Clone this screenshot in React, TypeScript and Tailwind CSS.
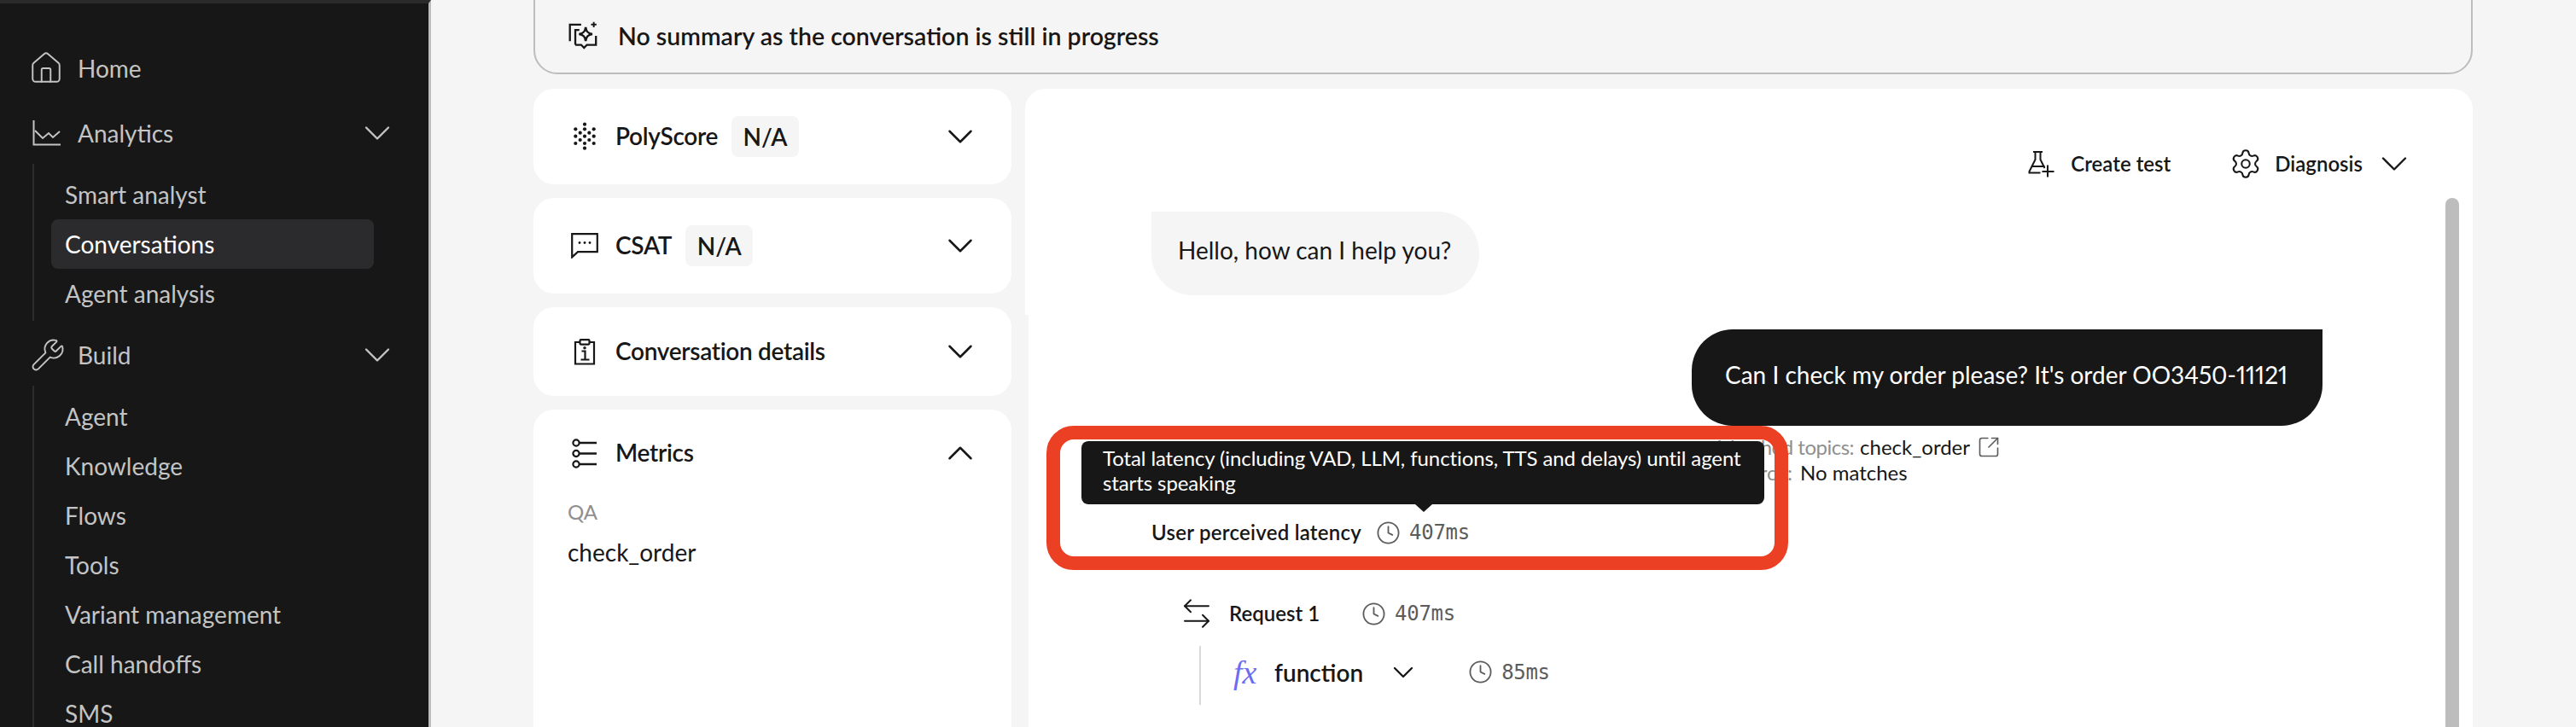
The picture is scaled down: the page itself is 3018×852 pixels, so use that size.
import { ChevronDown, ChevronUp, Clock, ArrowLeftRight, House, Wrench, Settings, SquareArrowOutUpRight } from 'lucide-react'

const analytics = ['Smart analyst', 'Conversations', 'Agent analysis']
const build = ['Agent', 'Knowledge', 'Flows', 'Tools', 'Variant management', 'Call handoffs', 'SMS']

const dots = [
  [25, 10.7], [14.3, 16.3], [25, 16.3], [35.7, 16.3], [19.7, 20.7], [30.3, 20.7], [14.3, 24.7], [25, 24.7],
  [35.7, 24.7], [19.7, 29], [30.3, 29], [14.3, 33], [25, 33], [35.7, 33], [25, 38.7],
]

const PolyIcon = () => (
  <svg width="50" height="50" viewBox="0 0 50 50" className="ml-[-12px] mr-[-11px] shrink-0">
    {dots.map(([x, y], i) => (
      <circle key={i} cx={x} cy={y} r="2.1" fill="#171717" />
    ))}
  </svg>
)

const SummaryIcon = () => (
  <svg width="38" height="38" viewBox="12 8 36 36" fill="none" stroke="#171717" strokeWidth="2.2" className="shrink-0">
    <path d="M15.5 32V13.5H28" />
    <path d="M21.5 36V19.5H26M21.5 36H28l3.2 3.4 3.2-3.4h10V26" />
    <path d="M33 16.5c.6 5 2.4 7 7.4 7.6-5 .6-6.8 2.6-7.4 7.6-.6-5-2.4-7-7.4-7.6 5-.6 6.8-2.6 7.4-7.6z" strokeWidth="2.4" />
    <path d="M42 10.5v6M39 13.5h6" strokeWidth="1.8" />
  </svg>
)

const ChatIcon = () => (
  <svg width="32" height="30" viewBox="0 0 32 30" fill="none" className="shrink-0">
    <path d="M1.2 1.2h29.6v21H8L1.2 28.4z" stroke="#171717" strokeWidth="2.2" />
    <circle cx="10" cy="11.5" r="1.4" fill="#171717" />
    <circle cx="16" cy="11.5" r="1.4" fill="#171717" />
    <circle cx="22" cy="11.5" r="1.4" fill="#171717" />
  </svg>
)

const ClipboardIcon = () => (
  <svg width="26" height="31" viewBox="0 0 26 31" fill="none" stroke="#171717" strokeWidth="2.2" className="shrink-0">
    <path d="M7.5 4H2v25.5h22V4h-5.5" />
    <rect x="7.5" y="1.2" width="11" height="5.4" rx="1" />
    <path d="M9.5 14.5H13.5V24M8.5 24.5h10" />
    <circle cx="13" cy="10.8" r=".7" fill="#171717" />
  </svg>
)

const MetricsIcon = () => (
  <svg width="30" height="35" viewBox="0 0 30 35" fill="none" stroke="#171717" strokeWidth="2.2" className="shrink-0">
    <circle cx="5" cy="5" r="3.6" />
    <circle cx="5" cy="17.5" r="3.6" />
    <circle cx="5" cy="30" r="3.6" />
    <path d="M9 5h20M9 17.5h20M9 30h20" strokeWidth="2.6" />
  </svg>
)

const AxisIcon = () => (
  <svg width="34" height="30" viewBox="0 0 34 30" fill="none" stroke="#c4c4c4" strokeWidth="2" className="shrink-0">
    <path d="M1.5 0v28.5H33" />
    <path d="M3 12l9 9 7-6 5 5 8-7" />
  </svg>
)

const FlaskPlus = () => (
  <svg width="31" height="31" viewBox="0 0 31 31" fill="none" stroke="#171717" strokeWidth="2" className="shrink-0">
    <path d="M6 1h11M8.5 1v9L1.5 24v1.6h13" />
    <path d="M14.5 1v9l5 10" />
    <path d="M4.5 18h15" />
    <path d="M23 16.5v14M16.5 24h14" />
  </svg>
)

const Timing = ({ value }: { value: string }) => (
  <div className="flex items-center gap-[10px]">
    <Clock size={29} strokeWidth={1.5} className="text-[#5c5c5c] shrink-0" />
    <span className="font-['DejaVu_Sans_Mono',monospace] text-[24px] leading-none text-[#5c5c5c] tracking-[-0.3px]">{value}</span>
  </div>
)

const Badge = () => (
  <span className="flex items-center justify-center w-[79px] h-[48px] rounded-[8px] bg-[#f5f5f5] text-[28px] font-semibold">N/A</span>
)

const CardHeader = ({ icon, title, open, badge }: { icon: React.ReactNode; title: string; open?: boolean; badge?: boolean }) => (
  <div className="flex items-center h-[48px]">
    <div className="w-[56px] flex items-center justify-center ml-[-8px] mr-[8px]">{icon}</div>
    <span className="text-[28px] leading-none font-semibold tracking-[-0.3px] pb-[3px]">{title}</span>
    {badge && <div className="ml-[16px]"><Badge /></div>}
    <div className="ml-auto mr-[35px]">
      {open ? <ChevronUp size={50} strokeWidth={1.2} /> : <ChevronDown size={50} strokeWidth={1.2} />}
    </div>
  </div>
)

const SideHead = ({ icon, label, chevron }: { icon: React.ReactNode; label: string; chevron?: boolean }) => (
  <div className="flex items-center h-[56px] shrink-0 pl-[38px] text-[#c4c4c4]">
    <div className="w-[53px] shrink-0 flex items-center">{icon}</div>
    <span className="text-[28px]">{label}</span>
    {chevron && <ChevronDown size={52} strokeWidth={1.1} className="ml-auto mr-[34px]" />}
  </div>
)

const SubList = ({ items, active }: { items: string[]; active?: string }) => (
  <div className="ml-[38px] border-l-2 border-[#2c2c2c] pl-[20px] pt-[7px] pb-[3px] w-[400px] shrink-0">
    {items.map((item) => (
      <div
        key={item}
        className={`h-[58px] flex items-center pl-[16px] rounded-[8px] text-[28px] ${item === active ? 'bg-[#2b2b2d] text-white' : 'text-[#c4c4c4]'}`}
      >
        {item}
      </div>
    ))}
  </div>
)

export default function App() {
  return (
    <div className="flex h-[852px] w-[3018px] overflow-hidden bg-[#f5f5f5] text-[#171717] font-['Lato',sans-serif]">
      <aside className="flex flex-col w-[505px] shrink-0 overflow-hidden bg-[#171717] border-r-[3px] border-[#bdbdbd] border-t-[4px] border-t-[#2a2a2a] pt-[48px]">
        <SideHead icon={<House size={42} strokeWidth={1.1} className="ml-[-5px]" />} label="Home" />
        <div className="mt-[20px] shrink-0">
          <SideHead icon={<AxisIcon />} label="Analytics" chevron />
        </div>
        <div className="mt-[8px] shrink-0">
          <SubList items={analytics} active="Conversations" />
        </div>
        <div className="mt-[12px] shrink-0">
          <SideHead icon={<Wrench size={42} strokeWidth={1.1} className="ml-[-3px]" />} label="Build" chevron />
        </div>
        <div className="mt-[8px] shrink-0">
          <SubList items={build} />
        </div>
      </aside>

      <main className="flex-1 min-w-0 pl-[120px] pr-[121px]">
        <div className="flex items-center h-[127px] mt-[-40px] pt-[37px] border-2 border-[#bdbdbd] rounded-[28px] pl-[37px] gap-[22px]">
          <SummaryIcon />
          <span className="text-[28.5px] font-semibold">No summary as the conversation is still in progress</span>
        </div>

        <div className="flex gap-[16px] mt-[17px] h-[748px]">
          <div className="flex flex-col gap-[16px] w-[560px] shrink-0">
            <div className="bg-white rounded-[24px] pt-[32px] pl-[40px] h-[112px]">
              <CardHeader icon={<PolyIcon />} title="PolyScore" badge />
            </div>
            <div className="bg-white rounded-[24px] pt-[32px] pl-[40px] h-[112px]">
              <CardHeader icon={<ChatIcon />} title="CSAT" badge />
            </div>
            <div className="bg-white rounded-[24px] pt-[28px] pl-[40px] h-[104px]">
              <CardHeader icon={<ClipboardIcon />} title="Conversation details" />
            </div>
            <div className="bg-white rounded-t-[24px] pt-[27px] pl-[40px] flex-1">
              <CardHeader icon={<MetricsIcon />} title="Metrics" open />
              <div className="mt-[30px] text-[24px] leading-[30px] text-[#8f8f8f]">QA</div>
              <div className="mt-[17px] text-[28px] leading-[30px]">check_order</div>
            </div>
          </div>

          <div className="relative flex-1 min-w-0 flex flex-col">
            <div className="h-[265px] shrink-0 bg-white rounded-t-[24px] pt-[64px]">
              <div className="flex items-center justify-end h-[48px] pr-[66px]">
                <FlaskPlus />
                <span className="ml-[19px] text-[24px] font-semibold">Create test</span>
                <Settings size={38} strokeWidth={1.3} className="ml-[69px]" />
                <span className="ml-[15px] text-[24px] font-semibold">Diagnosis</span>
                <ChevronDown size={52} strokeWidth={1.1} className="ml-[11px]" />
              </div>
              <div className="mt-[32px] ml-[148px] w-[384px] h-[98px] rounded-[48px] rounded-tl-none bg-[#f5f5f5] pl-[31px] pt-[27px] text-[28px] leading-[36px]">
                Hello, how can I help you?
              </div>
            </div>

            <div className="relative flex-1 ml-[4px] bg-white">
              <div className="mt-[17px] ml-[777px] w-[739px] h-[113px] rounded-[48px] rounded-tr-none bg-[#171717] text-white pl-[39px] pt-[35px] text-[28px] leading-[36px] proportional-nums">
                Can I check my order please? It's order OO3450-11121
              </div>
              <div className="ml-[806px] mt-[10px] text-[24px] leading-[30px]">
                <div className="flex items-center">
                  <span className="text-[#8f8f8f] tracking-[-0.5px]">Matched topics:</span>
                  <span className="ml-[7px]">check_order</span>
                  <SquareArrowOutUpRight size={28} strokeWidth={1.4} className="ml-[8px] text-[#5c5c5c]" />
                </div>
                <div className="flex">
                  <span className="text-[#8f8f8f] w-[98px] text-right pr-[9px]">Source:</span>
                  <span>No matches</span>
                </div>
              </div>

              <div className="flex items-center ml-[144px] mt-[35px] h-[40px]">
                <span className="text-[24px] font-semibold tracking-[0.25px]">User perceived latency</span>
                <div className="ml-[17px]"><Timing value="407ms" /></div>
              </div>

              <div className="flex items-center ml-[176px] mt-[55px] h-[40px]">
                <ArrowLeftRight size={42} strokeWidth={1.1} />
                <span className="ml-[17px] text-[24px] font-semibold">Request 1</span>
                <div className="ml-[49px]"><Timing value="407ms" /></div>
              </div>

              <div className="flex items-center ml-[200px] mt-[18px] h-[69px] pb-[8px] border-l-2 border-[#d9d9d9] pl-[38px]">
                <span className="font-['Liberation_Serif',serif] italic text-[38px] leading-none text-[#6d6cf0] w-[48px]">fx</span>
                <span className="text-[28px] font-semibold">function</span>
                <ChevronDown size={40} strokeWidth={1.4} className="ml-[27px]" />
                <div className="ml-[56px]"><Timing value="85ms" /></div>
              </div>

              <div className="absolute left-[21px] top-[130px] w-[869px] h-[169px] border-[16px] border-[#ec4024] rounded-[32px]" />
              <div className="absolute left-[62px] top-[148px] w-[800px] h-[74px] rounded-[8px] bg-[#171717] text-white text-[24px] leading-[29px] tracking-[-0.1px] pl-[25px] pt-[5px]">
                Total latency (including VAD, LLM, functions, TTS and delays) until agent starts speaking
                <div className="absolute left-[391px] top-[74px] w-0 h-0 border-x-[10px] border-x-transparent border-t-[9px] border-t-[#171717]" />
              </div>
            </div>

            <div className="absolute right-[16px] top-[128px] bottom-0 w-[16px] rounded-t-full bg-[#bdbdbd]" />
          </div>
        </div>
      </main>
    </div>
  )
}
